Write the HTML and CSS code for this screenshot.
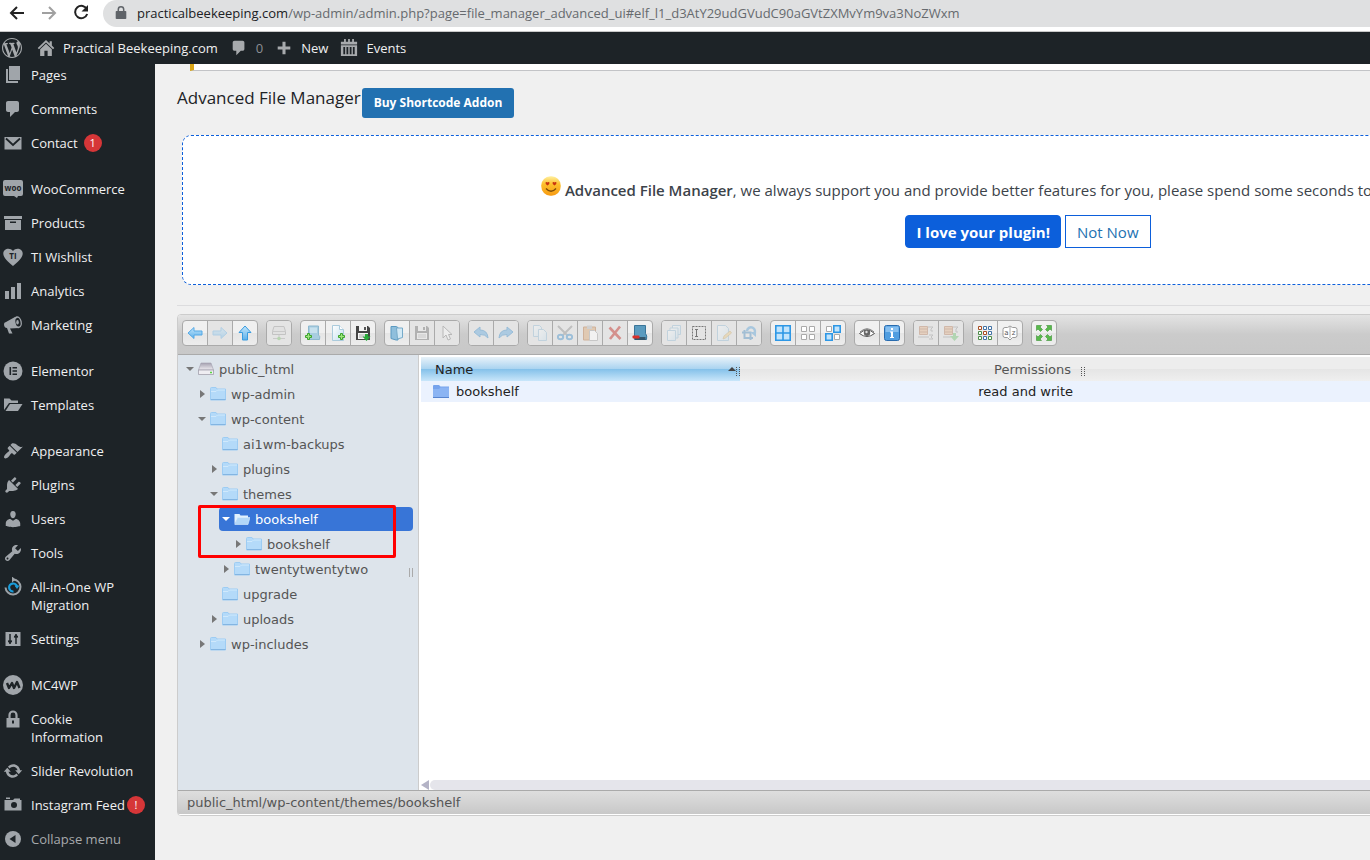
FILE: index.html
```html
<!DOCTYPE html>
<html lang="en">
<head>
  <meta charset="UTF-8">
  <meta name="viewport" content="width=device-width, initial-scale=1.0">
  <title>Advanced File Manager</title>
  <link rel="stylesheet" href="styles.css">
</head>
<body>
  <!-- shared icon shapes -->
  <svg class="sprite" aria-hidden="true">
    <defs>
      <linearGradient id="blue" x1="0" y1="0" x2="0" y2="1"><stop offset="0" stop-color="#c3e6fb"/><stop offset="1" stop-color="#5db0ea"/></linearGradient>
      <linearGradient id="pale" x1="0" y1="0" x2="1" y2="1"><stop offset="0" stop-color="#fff"/><stop offset="1" stop-color="#c4e0f0"/></linearGradient>
      <linearGradient id="sun" x1="0" y1="0" x2="0" y2="1"><stop offset="0" stop-color="#fff0a0"/><stop offset=".4" stop-color="#fdc02c"/><stop offset="1" stop-color="#f79a12"/></linearGradient>
      <linearGradient id="metal" x1="0" y1="0" x2="0" y2="1"><stop offset="0" stop-color="#a5a1b0"/><stop offset="1" stop-color="#efedf2"/></linearGradient>
    </defs>
    <symbol id="comment" viewBox="0 0 20 20"><path d="M5 2h9c1.1 0 2 .9 2 2v7c0 1.1-.9 2-2 2h-2l-5 5v-5H5c-1.1 0-2-.9-2-2V4c0-1.1.9-2 2-2z"/></symbol>
    <symbol id="folder" viewBox="0 0 16 16"><path d="M.5 2.500q0-1 1-1H6l1 1.500h8.500v11H.5z" fill="#b4daf9" stroke="#9dccf3"/><path d="M1 5.500h5l1.500-1.500H15" fill="none" stroke="#d0e9fc"/><path d="M1 13.500h14.500" stroke="#83b5e2"/></symbol>
    <symbol id="folder-open" viewBox="0 0 16 16"><path d="M.5 13V3h5l1 1.500h7.500V7H4z" fill="#e2f1fd"/><path d="M.8 13.500 3.500 6.500H16l-2 7z" fill="#b2d7f8" stroke="#dceefd" stroke-width=".6"/></symbol>
    <symbol id="plus-green" viewBox="0 0 8 8"><path d="M2.500.5h2v2h2v2h-2v2h-2v-2h-2v-2h2z" fill="#a0e47e" stroke="#3ca42c"/></symbol>
  </svg>

  <div class="browser">
    <button class="nav-btn" aria-label="Back"><svg viewBox="0 0 20 20"><path d="M17 10H4M10 4l-6 6 6 6" class="nav-line"/></svg></button>
    <button class="nav-btn off" aria-label="Forward"><svg viewBox="0 0 20 20"><path d="M3 10h13M10 4l6 6-6 6" class="nav-line"/></svg></button>
    <button class="nav-btn" aria-label="Reload"><svg viewBox="0 0 20 20"><path d="M16 6.500A6.200 6.200 0 1 0 16.200 11" class="nav-line"/><path d="M17 2v6.500h-6.500z"/></svg></button>
    <div class="address">
      <svg viewBox="0 0 12 14" class="lock"><path d="M1.500 5h9q.8 0 .8.800v6.400q0 .8-.8.800h-9q-.8 0-.8-.8V5.800q0-.8.800-.8z"/><path d="M3.300 5V3.500a2.700 2.700 0 0 1 5.400 0V5" fill="none" stroke="#5f6368" stroke-width="1.500"/></svg>
      <span class="url"><b>practicalbeekeeping.com</b>/wp-admin/admin.php?page=file_manager_advanced_ui#elf_l1_d3AtY29udGVudC90aGVtZXMvYm9va3NoZWxm</span>
    </div>
  </div>

  <header class="adminbar">
    <a href="#" class="bar-logo" aria-label="About WordPress"><svg viewBox="0 0 20 20"><path d="M20 10c0-5.510-4.490-10-10-10C4.480 0 0 4.490 0 10c0 5.520 4.480 10 10 10 5.510 0 10-4.480 10-10zM7.780 15.370L4.370 6.220c.55-.02 1.170-.08 1.170-.08.5-.06.44-1.130-.06-1.110 0 0-1.450.11-2.370.11-.18 0-.37 0-.58-.01C4.120 2.690 6.870 1.110 10 1.110c2.330 0 4.450.87 6.050 2.340-.68-.11-1.650.39-1.650 1.580 0 .74.45 1.360.9 2.100.35.61.55 1.360.55 2.460 0 1.490-1.400 5-1.400 5l-3.030-8.370c.54-.02.82-.17.82-.17.5-.05.44-1.250-.06-1.220 0 0-1.440.12-2.380.12-.87 0-2.330-.12-2.330-.12-.5-.03-.56 1.200-.06 1.220l.92.08 1.260 3.410zM17.410 10c.24-.64.74-1.870.43-4.250.7 1.290 1.050 2.710 1.050 4.250 0 3.290-1.730 6.240-4.400 7.780.97-2.590 1.940-5.200 2.920-7.780zM6.100 18.090C3.120 16.650 1.110 13.530 1.110 10c0-1.300.23-2.480.72-3.590C3.250 10.300 4.670 14.200 6.100 18.090zm4.030-6.630l2.580 6.980c-.86.29-1.760.45-2.710.45-.79 0-1.570-.11-2.290-.33.81-2.380 1.620-4.740 2.420-7.100z"/></svg></a>
    <a href="#"><svg viewBox="0 0 20 20"><path d="M10 1 .8 10l1.400 1.400L10 4l7.800 7.400L19.200 10 16.500 7.300V2.500h-2.500v2.400z"/><path d="M10 5.300 3.500 11.500V19h4.700v-6h3.600v6h4.700v-7.500z"/></svg>Practical Beekeeping.com</a>
    <a href="#" class="dim"><svg viewBox="0 0 20 20"><use href="#comment"/></svg>0</a>
    <a href="#"><svg viewBox="0 0 20 20"><path d="M8.300 3h3.400v5.300H17v3.400h-5.300V17H8.300v-5.300H3V8.300h5.300z"/></svg>New</a>
    <a href="#"><svg viewBox="0 0 20 20"><path d="M1 3h3.500V0h2v3h2.500V0h2v3h2.500V0h2v3H19v3H1zM1 7h18v12H1zM3.700 9v8h2V9zm3.500 0v8h2V9zm3.600 0v8h2V9zm3.500 0v8h2V9z" fill-rule="evenodd"/></svg>Events</a>
  </header>

  <div class="page">
    <nav class="sidebar">
      <ul>
        <li><a href="#"><svg viewBox="0 0 20 20"><path d="M6 1h11v14H6z"/><path d="M3 4h2v12h10v2H3z"/></svg><span>Pages</span></a></li>
        <li><a href="#"><svg viewBox="0 0 20 20"><use href="#comment"/></svg><span>Comments</span></a></li>
        <li><a href="#"><svg viewBox="0 0 20 20"><path d="M1.500 4h17v12.500h-17z"/><path d="m3 5.500 7 6.500 7-6.500" fill="none" stroke="#1d2327" stroke-width="1.800"/></svg><span>Contact</span><span class="badge">1</span></a></li>
        <li class="gap"><a href="#"><svg viewBox="0 0 20 20"><path d="M2 1h16q2 0 2 2v12q0 2-2 2h-3l-1 2-3-2H2q-2 0-2-2V3q0-2 2-2z"/><text x="10" y="11.500" class="icon-text" font-size="8">woo</text></svg><span>WooCommerce</span></a></li>
        <li><a href="#"><svg viewBox="0 0 20 20"><path d="M1 3h18v3H1z"/><path d="M2 7h16v10H2zM7 8.500V10h6V8.500z" fill-rule="evenodd"/></svg><span>Products</span></a></li>
        <li><a href="#"><svg viewBox="0 0 20 20"><path d="M10 19C5 14.500.3 11 .3 6.500.3 1.500 7 0 10 4c3-4 9.700-2.500 9.700 2.500 0 4.500-4.700 8-9.700 12.500z"/><text x="10" y="12" class="icon-text" font-size="8">TI</text></svg><span>TI Wishlist</span></a></li>
        <li><a href="#"><svg viewBox="0 0 20 20"><path d="M2 10h4v8H2zM8 6h4v12H8zM14 2h4v16h-4z"/></svg><span>Analytics</span></a></li>
        <li><a href="#"><svg viewBox="0 0 20 20"><path d="M1 9q0-1.500 2-2L12 2l4 11-9 .5 2.500 5H6L4 13q-3 0-3-4z"/><ellipse cx="14.800" cy="7.200" rx="4" ry="6" transform="rotate(-12 14.800 7.200)"/><ellipse cx="15" cy="7.200" rx="2.500" ry="4.400" transform="rotate(-12 15 7.200)" fill="#1d2327"/><ellipse cx="14.500" cy="7.200" rx="1.300" ry="2.200"/></svg><span>Marketing</span></a></li>
        <li class="gap"><a href="#"><svg viewBox="0 0 20 20"><circle cx="10" cy="10" r="9.500"/><path d="M6.500 6h1.600v8H6.500zM9.500 6H14v1.500H9.500zM9.500 9.200H14v1.600H9.500zM9.500 12.500H14V14H9.500z" class="cut"/></svg><span>Elementor</span></a></li>
        <li><a href="#"><svg viewBox="0 0 20 20"><path d="M1 15V3.500h5.500l2 2H15V8H6z"/><path d="M2.500 16 7 9h12.500L15 16z"/></svg><span>Templates</span></a></li>
        <li class="gap"><a href="#"><svg viewBox="0 0 20 20"><path d="M14.480 11.060L7.410 3.990l1.500-1.500c.5-.56 2.300-.47 3.510.32 1.210.8 1.430 1.280 2.910 2.100 1.180.64 2.450 1.260 4.450.85zm-.71.71L6.700 4.700 4.930 6.470c-.39.39-.39 1.020 0 1.410l1.060 1.060c.39.39.39 1.030 0 1.420-.6.6-1.430 1.110-2.210 1.690-.35.26-.7.53-1.010.84C1.430 14.230.4 16.080 1.400 17.070c.99 1 2.840-.03 4.180-1.360.31-.31.58-.66.85-1.020.57-.78 1.080-1.610 1.690-2.210.39-.39 1.020-.39 1.410 0l1.060 1.060c.39.39 1.020.39 1.410 0z"/></svg><span>Appearance</span></a></li>
        <li><a href="#"><svg viewBox="0 0 20 20"><path d="M13.110 4.360L9.870 7.600 8 5.730l3.240-3.240c.35-.34 1.050-.2 1.560.32.52.51.66 1.210.31 1.550zm-8 1.770l.91-1.120 9.010 9.010-1.190.84c-.71.71-2.630 1.160-3.820 1.160H6.140L4.900 17.260c-.59.59-1.540.59-2.120 0-.59-.58-.59-1.530 0-2.120l1.240-1.240v-3.880c0-1.130.4-3.190 1.090-3.890zm7.260 3.970l3.240-3.240c.34-.35 1.040-.21 1.550.31.52.51.66 1.210.31 1.550l-3.240 3.250z"/></svg><span>Plugins</span></a></li>
        <li><a href="#"><svg viewBox="0 0 20 20"><path d="M10 9.250c-2.270 0-2.730-3.440-2.730-3.440C7 4.020 7.820 2 9.970 2c2.160 0 2.980 2.020 2.710 3.810 0 0-.41 3.440-2.680 3.440zm0 2.570L12.720 10c2.390 0 4.520 2.330 4.520 4.530v2.490s-3.650 1.130-7.240 1.130c-3.650 0-7.240-1.130-7.240-1.130v-2.490c0-2.250 1.940-4.480 4.470-4.480z"/></svg><span>Users</span></a></li>
        <li><a href="#"><svg viewBox="0 0 20 20"><path d="M16.680 9.770c-1.340 1.340-3.300 1.670-4.950.99l-5.410 6.520c-.99.99-2.590.99-3.580 0s-.99-2.590 0-3.570l6.520-5.420c-.68-1.650-.35-3.610.99-4.950 1.280-1.280 3.120-1.620 4.720-1.060l-2.890 2.890 2.820 2.820 2.860-2.870c.53 1.580.18 3.390-1.080 4.650zM3.810 16.210c.4.39 1.040.39 1.430 0 .4-.4.4-1.040 0-1.430-.39-.4-1.030-.4-1.430 0-.39.39-.39 1.030 0 1.430z"/></svg><span>Tools</span></a></li>
        <li><a href="#"><svg viewBox="0 0 20 20"><g fill="none" stroke-width="2"><path d="M10 2.500a7.500 7.500 0 1 1-7.500 8" stroke="#9ca2a7"/><path d="M10.500 14.500a4 4 0 1 1 3.500-5" stroke="#1a9ddb" stroke-width="2.200"/></g><path d="M11.500 8.500h5l-2.500 3.500z" fill="#1a9ddb"/><path d="m9-.5 3.500 3-3.500 3z"/></svg><span>All-in-One WP Migration</span></a></li>
        <li><a href="#"><svg viewBox="0 0 20 20"><path d="M2.500 3h15v14h-15z"/><path d="M7 5v10M13 5v10M5 12.500h4M11 7.500h4" fill="none" stroke="#1d2327" stroke-width="1.500"/><path d="M4.800 11.500h4.400L7 15zM10.800 8.500h4.400L13 5z" class="cut"/></svg><span>Settings</span></a></li>
        <li class="gap"><a href="#"><svg viewBox="0 0 20 20"><circle cx="10" cy="10" r="10"/><path d="m4 8 2 5 3-5 2 5 3-6 2.500 6" fill="none" stroke="#1d2327" stroke-width="2.400" stroke-linejoin="round"/></svg><span>MC4WP</span></a></li>
        <li><a href="#"><svg viewBox="0 0 20 20"><path d="M3.500 9h13v9.500h-13zM9 11.500v3h2v-3z" fill-rule="evenodd"/><path d="M6.500 9V6a3.500 3.500 0 0 1 7 0v3" fill="none" stroke="#a0a5aa" stroke-width="2.200"/></svg><span>Cookie Information</span></a></li>
        <li><a href="#"><svg viewBox="0 0 20 20"><path d="M10.200 3.280c3.530 0 6.430 2.610 6.920 6h2.080l-3.500 4-3.500-4h2.320c-.45-1.970-2.210-3.450-4.320-3.450-1.450 0-2.730.71-3.540 1.780L4.950 5.660C6.230 4.200 8.110 3.280 10.200 3.280zm-.4 13.440c-3.520 0-6.430-2.610-6.920-6H.8l3.500-4c1.170 1.330 2.330 2.670 3.500 4H5.480c.45 1.970 2.210 3.450 4.320 3.450 1.450 0 2.730-.71 3.540-1.780l1.710 1.950c-1.280 1.460-3.150 2.380-5.250 2.380z"/></svg><span>Slider Revolution</span></a></li>
        <li><a href="#"><svg viewBox="0 0 20 20"><path d="M1.500 5h8.500l1.500-1.500H17V5h1.500v10.500h-17zM3 2.500h4V4H3z"/><circle cx="11" cy="10" r="3" class="cut"/></svg><span>Instagram Feed</span><span class="badge tight">!</span></a></li>
        <li><button class="collapse"><svg viewBox="0 0 20 20"><circle cx="10" cy="10" r="8"/><path d="M12.500 6v8L6.500 10z" class="cut"/></svg><span>Collapse menu</span></button></li>
      </ul>
    </nav>

    <main class="content">
      <div class="warning"></div>
      <div class="heading">
        <h1>Advanced File Manager</h1>
        <a href="#" class="buy">Buy Shortcode Addon</a>
      </div>

      <section class="notice">
        <p><svg class="smiley" viewBox="0 0 20 20"><rect x=".3" y=".3" width="19.400" height="19.400" rx="9" fill="url(#sun)"/><path d="M4.500 7q0-1 1-1 .7 0 1 .6.3-.6 1-.6 1 0 1 1 0 1-2 2.500-2-1.500-2-2.500zM11.500 7q0-1 1-1 .7 0 1 .6.3-.6 1-.6 1 0 1 1 0 1-2 2.500-2-1.500-2-2.500z" fill="#c8340f"/><path d="M5 12.500q5 5.500 10 0" fill="none" stroke="#7d4b07" stroke-width="1.300"/></svg>
        <strong>Advanced File Manager</strong>, we always support you and provide better features for you, please spend some seconds to</p>
        <div class="notice-actions">
          <button class="love">I love your plugin!</button>
          <button class="later">Not Now</button>
        </div>
      </section>

      <hr>

      <section class="manager">
        <div class="toolbar">
          <div class="group">
            <button aria-label="Back"><svg viewBox="0 0 16 16"><path d="m1 8 6-5.500V6h8v4H7v3.500z" fill="url(#blue)" stroke="#54a9e6"/></svg></button>
            <button class="off" aria-label="Forward"><svg viewBox="0 0 16 16"><path d="M15 8 9 2.500V6H1v4h8v3.500z" fill="url(#blue)" stroke="#54a9e6"/></svg></button>
            <button aria-label="Up"><svg viewBox="0 0 16 16"><path d="m8 1 6 6.500h-3.500V15h-5V7.500H2z" fill="url(#blue)" stroke="#399bdf"/></svg></button>
          </div>
          <div class="group">
            <button class="off" aria-label="Mount volume"><svg viewBox="0 0 16 16"><path d="M3 1.500h10l1.500 5v3h-13v-3z" fill="#ddd" stroke="#888"/><path d="M1.500 6.500h13M8 10v3M2 13.500h12" stroke="#999"/><circle cx="8" cy="13.500" r="1.800" fill="#64b952"/></svg></button>
          </div>
          <div class="group">
            <button aria-label="New folder"><svg viewBox="0 0 16 16"><path d="M3.500 1h10v9q2 1 1 4.500h-11z" fill="#a7cde0" stroke="#8db8cf"/><path d="M5 2.500h7V8H5z" fill="#c7e1ee"/><use href="#plus-green" x="0" y="8" width="8" height="8"/></svg></button>
            <button aria-label="New file"><svg viewBox="0 0 16 16"><path d="M2.500.5h7l4 4v11h-11z" fill="url(#pale)" stroke="#abcbdc"/><path d="M9.500.5v4h4" fill="#fff" stroke="#abcbdc"/><use href="#plus-green" x="8" y="8" width="8" height="8"/></svg></button>
            <button aria-label="Upload files"><svg viewBox="0 0 16 16"><path d="M1 1h12l2 2v12H1z" fill="#444"/><path d="M4 1h8v5H4z" fill="#f4f4f4"/><path d="M9 2h2v3H9z" fill="#555"/><path d="M3 8h10v6H3z" fill="#f6f6f6"/><path d="M4 10h6M4 12h5" stroke="#aaa"/><path d="M10 9h3v2.500h2.500L11.500 16l-4-4.500H10z" fill="#28a839"/></svg></button>
          </div>
          <div class="group">
            <button aria-label="Open"><svg viewBox="0 0 16 16"><path d="M2 1.500h5l2 1v12.500H7l-5-1.500z" fill="#8fbfdc" stroke="#5b9ac1"/><path d="M7.500 3h6v9.500L8.500 14z" fill="#d2e9f5" stroke="#76aac9"/></svg></button>
            <button class="off" aria-label="Download"><svg viewBox="0 0 16 16"><path d="M1 1h12l2 2v12H1z" fill="#555"/><path d="M4 1h8v5H4zM3 8h10v6H3z" fill="#eee"/><path d="M9 2h2v3H9z" fill="#555"/><path d="M4 10h8M4 12h8" stroke="#999"/></svg></button>
            <button class="off" aria-label="Select"><svg viewBox="0 0 16 16"><path d="M4 1v12l3-3 2 5 2.500-1-2-4.500H13z" fill="#fff" stroke="#666"/></svg></button>
          </div>
          <div class="group">
            <button class="half" aria-label="Undo"><svg viewBox="0 0 16 16"><path d="m1 7 6-5v3q7.500 0 8 8-3-4-8-3.500V12z" fill="#75b2df" stroke="#4f96cc"/></svg></button>
            <button class="half" aria-label="Redo"><svg viewBox="0 0 16 16"><path d="M15 7 9 2v3q-7.500 0-8 8 3-4 8-3.500V12z" fill="#75b2df" stroke="#4f96cc"/></svg></button>
          </div>
          <div class="group">
            <button class="off" aria-label="Copy"><svg viewBox="0 0 16 16"><path d="M1.500.5h6l2 2v9h-8z" fill="url(#pale)" stroke="#82b3d0"/><path d="M6.500 4.500h5l3 3v8h-8z" fill="url(#pale)" stroke="#82b3d0"/></svg></button>
            <button class="half" aria-label="Cut"><svg viewBox="0 0 16 16"><path d="m1 1 10 10M15 1 5 11" stroke="#999" stroke-width="2"/><ellipse cx="3.500" cy="12" rx="2.700" ry="2.200" class="ring"/><ellipse cx="12.500" cy="12" rx="2.700" ry="2.200" class="ring"/></svg></button>
            <button class="half" aria-label="Paste"><svg viewBox="0 0 16 16"><path d="M1.500 2h12v13h-12z" fill="#dcae80" stroke="#b97e50"/><path d="M5 .5h5V4H5z" fill="#bbb"/><path d="M7.500 5.500h5l3 3v7h-8z" fill="#fff" stroke="#aaa"/></svg></button>
            <button class="half" aria-label="Delete"><svg viewBox="0 0 16 16"><path d="m2.500 2.500 11 11.500M13 1.500 3 14" stroke="#c43c35" stroke-width="2.600"/></svg></button>
            <button aria-label="Empty folder"><svg viewBox="0 0 16 16"><path d="M2.500.5h11v8q2 2 1 6h-12z" fill="#5a9bbf" stroke="#3a7598"/><path d="M3 12h10.500v3H3z" fill="#35566b"/><rect x=".5" y="10.500" width="7" height="3" rx="1" fill="#d9312b"/></svg></button>
          </div>
          <div class="group">
            <button class="off" aria-label="Duplicate"><svg viewBox="0 0 16 16"><g fill="url(#pale)" stroke="#82b3d0"><path d="M6.500.5h8v9h-8z"/><path d="M4 3h8v10H4z"/><path d="M1.500 5.500h8v10h-8z"/></g></svg></button>
            <button class="dark" aria-label="Rename"><svg viewBox="0 0 16 16"><path d="M1.500 1.500h13v13h-13z" fill="none" stroke="#777" stroke-dasharray="2 1"/><path d="M4 4.500h3M4 11.500h3M5.500 4.500v7" stroke="#777"/></svg></button>
            <button class="off" aria-label="Edit file"><svg viewBox="0 0 16 16"><path d="M1.500.5h8l3 3v12h-11z" fill="url(#pale)" stroke="#82b3d0"/><path d="m7 14 1-3 6-5 1.500 2-6 5z" fill="#ecc572" stroke="#b88e3b" stroke-width=".7"/></svg></button>
            <button class="half" aria-label="Resize and rotate"><svg viewBox="0 0 16 16"><path d="M3.500 5v8H12M1 7.500h8.500V15" fill="none" stroke="#6198c4" stroke-width="2"/><path d="M6 6a4 4 0 1 1 7 3" fill="none" stroke="#6da9d7" stroke-width="2.500"/><path d="M9 7h6v5z" fill="#6da9d7"/></svg></button>
          </div>
          <div class="group">
            <button aria-label="Select all"><svg viewBox="0 0 16 16"><path d="M.8.800h14.400v14.400H.8zM8 1v14M1 8h14" fill="#c2e4fc" stroke="#2d97e5" stroke-width="1.600"/></svg></button>
            <button aria-label="Select none"><svg viewBox="0 0 16 16"><path d="M1.500 1.500h5v5h-5zM9.500 1.500h5v5h-5zM1.500 9.500h5v5h-5zM9.500 9.500h5v5h-5z" fill="#fff" stroke="#aaa"/></svg></button>
            <button aria-label="Invert selection"><svg viewBox="0 0 16 16"><path d="M1.500 1.500h5v5h-5zM9.500 9.500h5v5h-5z" fill="#fff" stroke="#aaa"/><path d="M8.800.800h6.400v6.400H8.800zM.8 8.800h6.400v6.400H.8z" fill="#c2e4fc" stroke="#2d97e5" stroke-width="1.600"/></svg></button>
          </div>
          <div class="group">
            <button aria-label="Preview"><svg viewBox="0 0 16 16"><path d="M.5 8.500q7.500-7 15 0-7.500 6-15 0z" fill="#fff" stroke="#555"/><path d="M1 7q7-6.500 14 0" fill="none" stroke="#777"/><circle cx="8" cy="7.800" r="3.200" fill="#666"/><circle cx="7.500" cy="7" r="1.200" fill="#ddd"/></svg></button>
            <button aria-label="Get info"><svg viewBox="0 0 16 16"><rect x=".5" y=".5" width="15" height="15" rx="2" fill="#4f9de0" stroke="#286bae"/><path d="M1.500 1.500h13V7h-13z" fill="#86bff0"/><path d="M7 3h2v2H7zM6 6.500h3V12h1v1H6v-1h1V7.500H6z" fill="#fff"/></svg></button>
          </div>
          <div class="group">
            <button class="off" aria-label="Extract"><svg viewBox="0 0 16 16"><path d="M1.500 1.500h8v8h-8zM1.500 4h8M1.500 7h8" fill="#e7ac7b" stroke="#ad6840"/><path d="M10 2h5l-2 2v2h2M11 10h4l-2 2 2 2h-4M0 12h11" fill="none" stroke="#888"/></svg></button>
            <button class="off" aria-label="Archive"><svg viewBox="0 0 16 16"><path d="M1.500 1.500h8v8h-8zM1.500 4h8M1.500 7h8" fill="#e7ac7b" stroke="#ad6840"/><path d="M10 2h5l-2 2v3h2M0 12h8" fill="none" stroke="#888"/><path d="M10 8h3v3h3l-4.500 5L7 11h3z" fill="#56bb58"/></svg></button>
          </div>
          <div class="group">
            <button aria-label="Icons view"><svg viewBox="0 0 16 16"><g fill="#fff"><path d="M1.500 1.500h3v3h-3zM6.500 6.500h3v3h-3z" stroke="#a84e24"/><path d="M6.500 1.500h3v3h-3zM11.500 1.500h3v3h-3zM11.500 6.500h3v3h-3zM6.500 11.500h3v3h-3z" stroke="#4373a5"/><path d="M1.500 6.500h3v3h-3zM1.500 11.500h3v3h-3zM11.500 11.500h3v3h-3z" stroke="#4d8d4a"/></g></svg></button>
            <button aria-label="Sort"><svg viewBox="0 0 16 16"><path d="M3 2.500h2.500L8 1l2.500 1.500H13q2 0 2 2v6q0 2-2 2h-2.500L8 15l-2.500-2.500H3q-2 0-2-2v-6q0-2 2-2z" fill="#fff" stroke="#999"/><path d="M8 2v11" stroke="#aaa"/><text x="4.500" y="10" class="sort-text">a</text><text x="11.500" y="10" class="sort-text">z</text></svg></button>
          </div>
          <div class="group">
            <button aria-label="Full screen"><svg viewBox="0 0 16 16"><g fill="#59b94c" stroke="#3d9236" stroke-width=".6"><path d="M.5.500h5L4 2l2.500 2.500-2 2L2 4 .5 5.500z"/><path d="M15.500.500v5L14 4l-2.500 2.500-2-2L12 2 10.500.5z"/><path d="M.5 15.500v-5L2 12l2.500-2.500 2 2L4 14l1.500 1.500z"/><path d="M15.500 15.500h-5L12 14l-2.500-2.500 2-2L14 12l1.500-1.500z"/></g></svg></button>
          </div>
        </div>

        <div class="workzone">
          <div class="tree">
            <ul>
              <li><a href="#" class="node open"><svg viewBox="0 0 16 16"><path d="M3 2h10l2.500 7H.5z" fill="url(#metal)" stroke="#a5a1b0" stroke-width=".6"/><path d="M.5 9h15v4.500H.5z" fill="#efedf2" stroke="#9a97a4" stroke-width=".7"/><path d="M12 11.500h2" stroke="#58d440" stroke-width="1.500"/></svg>public_html</a>
                <ul>
                  <li><a href="#" class="node closed"><svg><use href="#folder"/></svg>wp-admin</a></li>
                  <li><a href="#" class="node open"><svg><use href="#folder"/></svg>wp-content</a>
                    <ul>
                      <li><a href="#" class="node"><svg><use href="#folder"/></svg>ai1wm-backups</a></li>
                      <li><a href="#" class="node closed"><svg><use href="#folder"/></svg>plugins</a></li>
                      <li><a href="#" class="node open"><svg><use href="#folder"/></svg>themes</a>
                        <ul>
                          <li class="marked"><a href="#" class="node open active"><svg><use href="#folder-open"/></svg>bookshelf</a>
                            <ul>
                              <li><a href="#" class="node closed"><svg><use href="#folder"/></svg>bookshelf</a></li>
                            </ul>
                          </li>
                          <li><a href="#" class="node closed"><svg><use href="#folder"/></svg>twentytwentytwo</a></li>
                        </ul>
                      </li>
                      <li><a href="#" class="node"><svg><use href="#folder"/></svg>upgrade</a></li>
                      <li><a href="#" class="node closed"><svg><use href="#folder"/></svg>uploads</a></li>
                    </ul>
                  </li>
                  <li><a href="#" class="node closed"><svg><use href="#folder"/></svg>wp-includes</a></li>
                </ul>
              </li>
            </ul>
            <span class="resizer"></span>
          </div>

          <div class="files">
            <table>
              <thead>
                <tr><th class="col-name"><div>Name<span class="sort-up"></span><i class="grip"></i></div></th><th class="col-perm"><div>Permissions<i class="grip"></i></div></th><th></th></tr>
              </thead>
              <tbody>
                <tr><td><div><svg viewBox="0 0 16 16"><path d="M0 2q0-1 1-1h5l1.500 1.500H16V14H0z" fill="#76a3ec"/><path d="M0 5h6l1.500-1.500H16V13H0z" fill="#8bb4f3"/><path d="M0 13.500h16" stroke="#5784cf"/></svg>bookshelf</div></td><td class="perm">read and write</td><td></td></tr>
              </tbody>
            </table>
            <div class="scrollbar"><span class="scroll-left"></span><span class="scroll-thumb"></span></div>
          </div>
        </div>

        <div class="statusbar">public_html/wp-content/themes/bookshelf</div>
      </section>
    </main>
  </div>
</body>
</html>
```
FILE: styles.css
```css
*,
*::before,
*::after {
  box-sizing: border-box;
}

body {
  margin: 0;
  height: 100vh;
  display: flex;
  flex-direction: column;
  overflow: hidden;
  background: #f0f0f0;
  color: #3c434a;
  font-family: "Open Sans", "Noto Sans", sans-serif;
  font-size: 13px;
}

ul {
  list-style: none;
  margin: 0;
  padding: 0;
}

a {
  color: inherit;
  text-decoration: none;
}

button {
  font: inherit;
  cursor: pointer;
}

.sprite {
  position: absolute;
  width: 0;
  height: 0;
}

/* browser bar */
.browser {
  display: flex;
  flex: none;
  height: 32px;
  padding: 0 0 5px 7px;
  gap: 12px;
  align-items: center;
  background: #fff;
  border-bottom: 1px solid #c8c8c8;
}

.nav-btn {
  width: 20px;
  height: 20px;
  padding: 0;
  border: 0;
  background: none;
  fill: #222;
  stroke: #222;
}

.nav-btn svg {
  display: block;
}

.nav-btn path {
  stroke-width: 0;
}

.nav-btn .nav-line {
  fill: none;
  stroke-width: 2;
}

.nav-btn.off {
  stroke: #a0a0a0;
}

.address {
  flex: 1;
  height: 27px;
  display: flex;
  align-items: center;
  gap: 10px;
  padding-left: 12px;
  border-radius: 14px 0 0 14px;
  background: #dfe0e1;
}

.lock {
  width: 12px;
  height: 14px;
  fill: #5f6368;
}

.url {
  color: #666a6e;
  white-space: nowrap;
}

.url b {
  color: #202124;
  font-weight: 400;
}

/* WordPress admin bar */
.adminbar {
  display: flex;
  flex: none;
  height: 32px;
  padding-left: 2px;
  gap: 12px;
  align-items: center;
  background: #1d2327;
  color: #f0f0f1;
}

.adminbar a {
  display: flex;
  align-items: center;
  gap: 8px;
}

.adminbar svg {
  width: 18px;
  height: 18px;
  fill: #a7aaad;
}

.adminbar .bar-logo {
  margin-right: 3px;
}

.adminbar .bar-logo svg {
  width: 20px;
  height: 20px;
}

.adminbar .dim {
  color: #8c8f94;
}

.page {
  flex: 1;
  min-height: 0;
  display: flex;
  overflow: hidden;
}

/* side menu */
.sidebar {
  flex: none;
  width: 155px;
  background: #1d2327;
  color: #f0f0f1;
  overflow: hidden;
}

.sidebar ul {
  margin-top: -6px;
}

.sidebar a,
.collapse {
  display: flex;
  width: 100%;
  padding: 8px 0 8px 3px;
  border: 0;
  background: none;
  color: inherit;
  line-height: 18px;
  text-align: left;
}

.sidebar span {
  max-width: 110px;
}

.sidebar .gap {
  margin-top: 12px;
}

.sidebar svg {
  flex: none;
  width: 20px;
  height: 20px;
  margin: -1px 8px -1px 0;
  fill: #a0a5aa;
}

.sidebar .cut,
.icon-text {
  fill: #1d2327;
}

.icon-text {
  font-weight: 700;
  text-anchor: middle;
}

.sidebar .collapse {
  color: #a7aaad;
}

.badge {
  flex: none;
  width: 18px;
  height: 18px;
  margin-left: 6px;
  border-radius: 9px;
  background: #d63638;
  color: #fff;
  font-size: 11px;
  text-align: center;
}

.badge.tight {
  margin-left: 2px;
}

/* main column, wider than small windows and cut at the edge */
.content {
  flex: 1 0 1746px;
  padding: 0 22px 44px;
  display: flex;
  flex-direction: column;
}

.warning {
  flex: none;
  height: 7px;
  margin-left: 13px;
  border-left: 4px solid #dba617;
  border-bottom: 1px solid #c3c4c7;
  background: #fff;
}

.heading {
  display: flex;
  gap: 1px;
  margin: 17px 0;
}

h1 {
  margin: 0;
  color: #1d2327;
  font-size: 17px;
  font-weight: 400;
  line-height: 20px;
}

.buy {
  padding: 0 12px;
  border-radius: 3px;
  background: #2271b1;
  color: #fff;
  font-size: 12px;
  font-weight: 700;
  line-height: 30px;
}

.notice {
  flex: none;
  height: 150px;
  margin: 0 5px;
  padding-top: 39px;
  border: 1px dashed #0c5fdb;
  border-radius: 9px;
  background: #fff;
}

.notice p {
  margin: 0 0 0 358px;
  font-size: 15px;
  line-height: 30px;
}

.notice strong {
  font-weight: 600;
}

.smiley {
  width: 20px;
  height: 20px;
}

.notice-actions {
  display: flex;
  justify-content: center;
  gap: 4px;
  margin-top: 10px;
}

.notice-actions button {
  height: 33px;
  padding: 0 11px;
  border: 1px solid #0c5fdb;
  font-size: 15px;
}

.notice-actions .love {
  padding: 0 10px;
  border-radius: 4px;
  background: #0c5fdb;
  color: #fff;
  font-weight: 700;
}

.later {
  background: #fff;
  color: #2271b1;
}

hr {
  flex: none;
  width: 100%;
  margin: 20px 0 8px;
  border: 0;
  border-top: 1px solid #dcdcde;
}

/* file manager */
.manager {
  flex: 1;
  min-height: 0;
  display: flex;
  flex-direction: column;
  border: 1px solid #ccc;
  border-radius: 4px;
  background: #fff;
  color: #555;
  font-family: "DejaVu Sans", Verdana, sans-serif;
  overflow: hidden;
}

.toolbar {
  flex: none;
  display: flex;
  gap: 8px;
  padding: 5px 4px 8px;
  border-bottom: 1px solid #aaa;
  background: linear-gradient(#e3e3e3, #cbcbcb 50%, #c8c8c8);
}

.group {
  display: flex;
  border: 1px solid #aaa;
  border-radius: 4px;
  background: linear-gradient(#f0f0f0 50%, #e5e5e5 50%, #ededed);
  overflow: hidden;
}

.group button {
  width: 24px;
  height: 24px;
  padding: 4px;
  border: 0;
  background: none;
}

.group button + button {
  width: 25px;
  border-left: 1px solid #aaa;
}

.group svg {
  display: block;
  width: 16px;
  height: 16px;
}

.group .off,
.group .half,
.group .dark {
  background: #e4e4e4;
}

.off svg {
  opacity: .35;
}

.half svg {
  opacity: .5;
}

.nav-btn.off svg {
  opacity: 1;
}

.ring {
  fill: none;
  stroke: #5799cc;
  stroke-width: 2;
}

.sort-text {
  fill: #555;
  font-size: 7px;
  text-anchor: middle;
}

.workzone {
  flex: 1;
  min-height: 0;
  display: flex;
}

.tree {
  position: relative;
  flex: none;
  width: 241px;
  padding: 2px 5px;
  border-right: 1px solid #ccc;
  background: #dde4eb;
}

.tree ul ul {
  padding-left: 12px;
}

.node {
  position: relative;
  display: flex;
  align-items: center;
  height: 24px;
  margin-bottom: 1px;
  padding-left: 15px;
  gap: 5px;
  border-radius: 4px;
}

.node svg {
  width: 16px;
  height: 16px;
}

.node.open::before,
.node.closed::before {
  content: "";
  position: absolute;
  left: 3px;
  border: 4px solid transparent;
}

.node.open::before {
  top: 10px;
  border-top-color: #777;
}

.node.closed::before {
  top: 8px;
  left: 5px;
  border-width: 4px 5px;
  border-left-color: #777;
}

.node.active {
  background: #3875d7;
  color: #fff;
}

.node.active::before {
  border-top-color: #fff;
}

.marked {
  position: relative;
}

/* red frame over the two marked folders */
.marked::after {
  content: "";
  position: absolute;
  top: -2px;
  left: -21px;
  width: 198px;
  height: 53px;
  border: 3px solid #f00;
  border-radius: 2px;
  pointer-events: none;
}

.resizer {
  position: absolute;
  right: 5px;
  top: 50%;
  width: 4px;
  height: 9px;
  margin-top: -5px;
  border: solid #aaa;
  border-width: 0 1px;
}

.files {
  flex: 1;
  display: flex;
  flex-direction: column;
  justify-content: space-between;
  padding: 2px 0 0 2px;
}

table {
  width: 100%;
  table-layout: fixed;
  border-collapse: collapse;
}

th,
td {
  padding: 0;
  font-weight: 400;
  text-align: left;
}

th {
  height: 24px;
  background: linear-gradient(#ededed 50%, #e5e5e5 50%, #efefef);
}

th div,
td div {
  display: flex;
  align-items: center;
}

.col-name {
  width: 319px;
  background: linear-gradient(#e8f2f9, #a9d3f0 50%, #86c2ea 52%, #c9e6fa);
  color: #222;
}

.col-name div {
  padding-left: 14px;
}

.col-perm {
  width: 345px;
}

.col-perm div {
  justify-content: flex-end;
}

.sort-up {
  margin: 0 0 4px auto;
  border: 4px solid transparent;
  border-bottom-color: #444;
}

.grip {
  width: 4px;
  height: 9px;
  margin-top: 4px;
  border: dotted #555;
  border-width: 0 1px;
}

.col-perm .grip {
  margin-left: 10px;
}

td {
  height: 21px;
  background: #ebf2fe;
  color: #222;
}

td div {
  padding-left: 12px;
  gap: 7px;
}

td svg {
  width: 16px;
  height: 16px;
}

.perm {
  padding-right: 12px;
  text-align: right;
}

.scrollbar {
  display: flex;
  align-items: center;
  height: 10px;
  gap: 1px;
}

.scroll-left {
  border: 5px solid transparent;
  border-width: 5px 8px 5px 0;
  border-right-color: #b4b3c6;
}

.scroll-thumb {
  flex: 1;
  height: 10px;
  border-radius: 5px;
  background: #e5e5eb;
}

.statusbar {
  flex: none;
  height: 25px;
  padding-left: 9px;
  border-top: 1px solid #aaa;
  border-bottom: 1px solid #fff;
  background: linear-gradient(#dedede, #c8c8c8);
  line-height: 24px;
}
```
